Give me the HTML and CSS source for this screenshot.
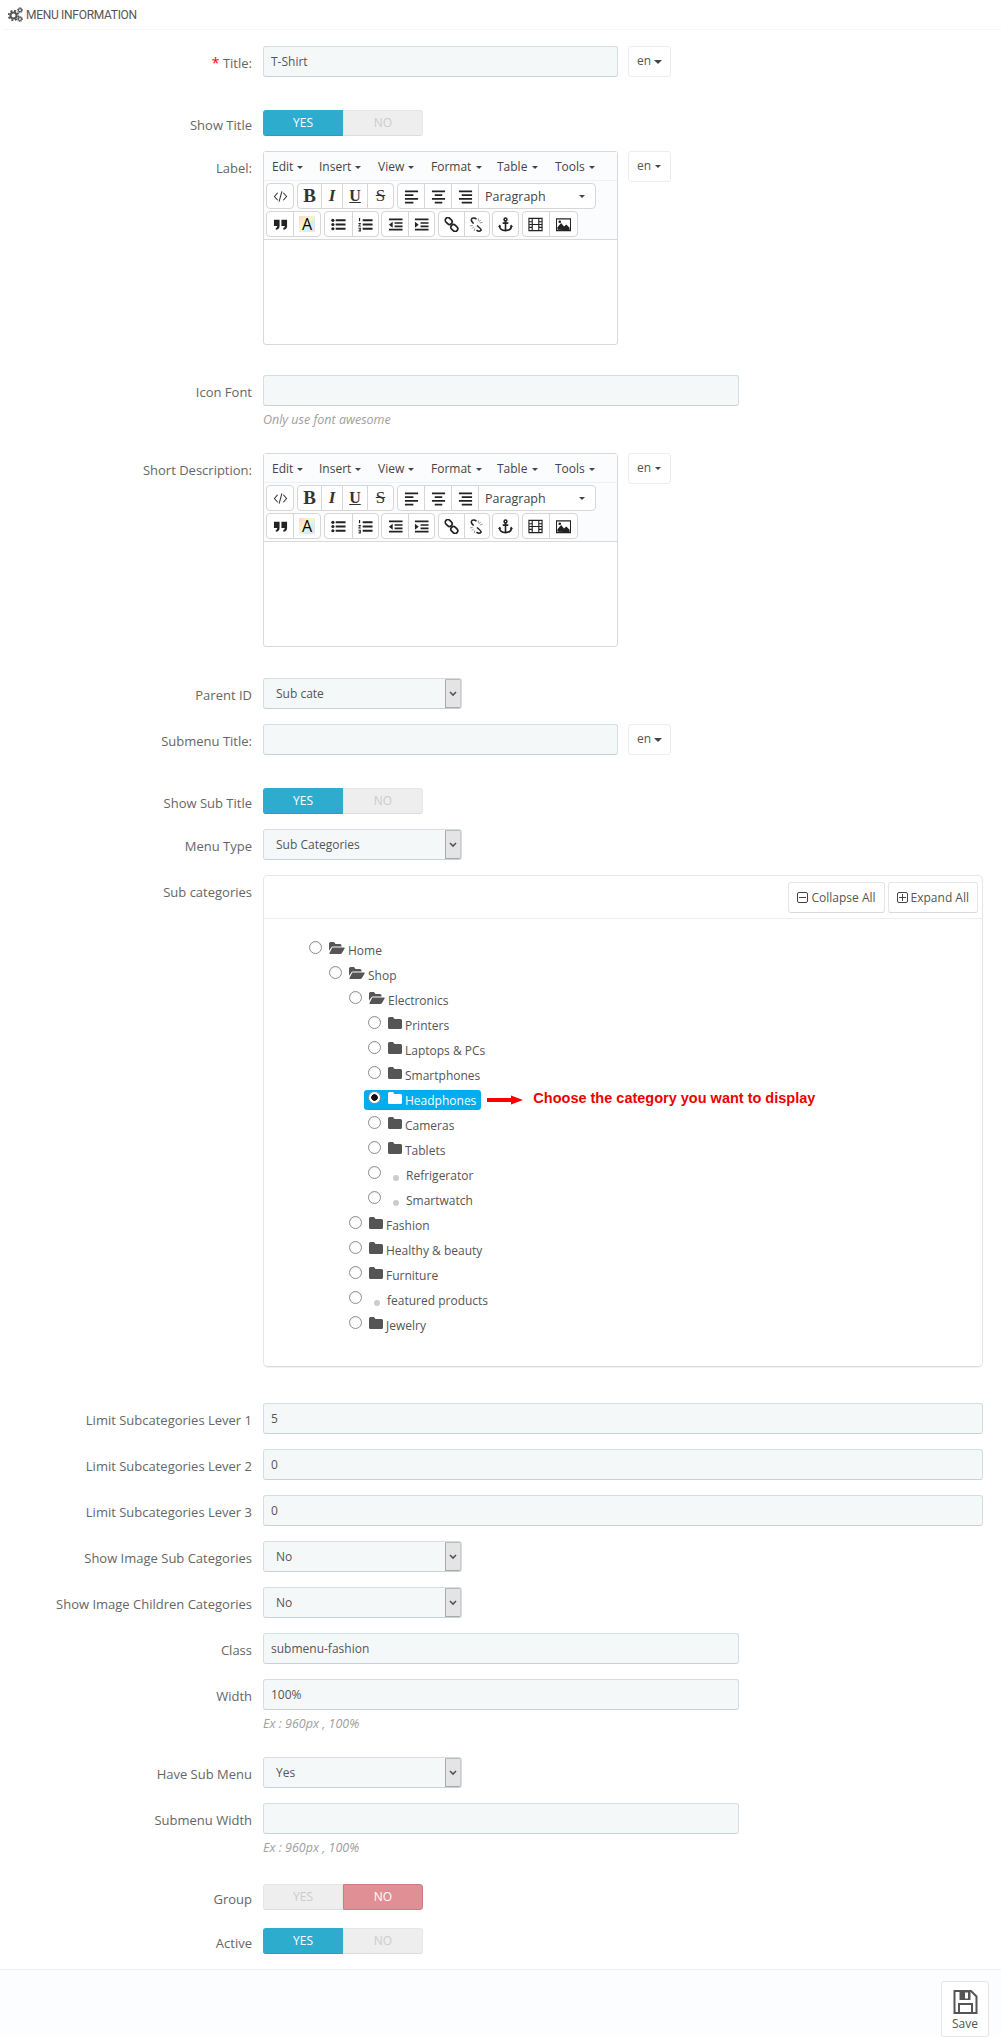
FILE: index.html
```html
<!DOCTYPE html>
<html lang="en">
<head>
<meta charset="utf-8">
<title>Menu information</title>
<link rel="stylesheet" href="styles.css">
</head>
<body>
<svg class="defs" width="0" height="0" aria-hidden="true">
  <symbol id="i-code" viewBox="0 0 16 16"><path d="M5 4 1.500 8 5 12M11 4l3.500 4L11 12M9.500 2.500 6.500 13.500" fill="none" stroke="#333" stroke-width="1.100"/></symbol>
  <symbol id="i-al" viewBox="0 0 16 16"><path d="M1 1.500h14v2H1zM1 5.500h9v2H1zM1 9.500h14v2H1zM1 13.500h9v2H1z" fill="#222"/></symbol>
  <symbol id="i-ac" viewBox="0 0 16 16"><path d="M1 1.500h14v2H1zM4 5.500h8v2H4zM1 9.500h14v2H1zM4 13.500h8v2H4z" fill="#222"/></symbol>
  <symbol id="i-ar" viewBox="0 0 16 16"><path d="M1 1.500h14v2H1zM4 5.500h11v2H4zM1 9.500h14v2H1zM4 13.500h11v2H4z" fill="#222"/></symbol>
  <symbol id="i-quote" viewBox="0 0 16 16"><path d="M1 3h6v6.500c0 2.500-1.500 3.800-4 4V11.500c1 0 1.500-.7 1.500-2H1zM9 3h6v6.500c0 2.500-1.500 3.800-4 4V11.500c1 0 1.500-.7 1.500-2H9z" fill="#222"/></symbol>
  <symbol id="i-ul" viewBox="0 0 16 16"><path d="M5 2.500h10.500v2H5zM5 7h10.500v2H5zM5 11.500h10.500v2H5z" fill="#222"/><circle cx="2" cy="3.500" r="1.700" fill="#222"/><circle cx="2" cy="8" r="1.700" fill="#222"/><circle cx="2" cy="12.500" r="1.700" fill="#222"/></symbol>
  <symbol id="i-ol" viewBox="0 0 16 16"><path d="M5 2.500h10.500v2H5zM5 7h10.500v2H5zM5 11.500h10.500v2H5z" fill="#222"/><path d="M1 1h1.300v3.500H1zM.5 6.500h2.500v1L1.500 9H3v1H.5V9L2 7.500H.5zM.5 11.500H3V15.500H.5v-1H2V14H1v-.8h1v-.7H.5z" fill="#222"/></symbol>
  <symbol id="i-out" viewBox="0 0 16 16"><path d="M1 1.500h14.500v2H1zM7 5.500h8.500v1.800H7zM7 9h8.500v1.800H7zM1 12.500h14.500v2H1z" fill="#222"/><path d="M5 5v6.500L1 8.200z" fill="#222"/></symbol>
  <symbol id="i-in" viewBox="0 0 16 16"><path d="M1 1.500h14.500v2H1zM7 5.500h8.500v1.800H7zM7 9h8.500v1.800H7zM1 12.500h14.500v2H1z" fill="#222"/><path d="M1 5v6.500l4-3.300z" fill="#222"/></symbol>
  <symbol id="i-link" viewBox="0 0 16 16"><g fill="none" stroke="#222" stroke-width="1.800"><rect x="1" y="1.500" width="8" height="5.600" rx="2.800" transform="rotate(45 5 4.300)"/><rect x="7" y="8.900" width="8" height="5.600" rx="2.800" transform="rotate(45 11 11.700)"/></g></symbol>
  <symbol id="i-unlink" viewBox="0 0 16 16"><g fill="none" stroke="#222" stroke-width="1.600"><path d="M8 2.500C6 .5 3 .8 2.500 2.800 2.100 4.300 3.200 5.300 5 7"/><path d="M8.500 9c1.800 1.700 3.800 2.800 4.600 4.800-.9 1.800-3.400 1.700-5.100.2"/></g><path d="M10 1.500v3M12.500 3 11 5M14.500 5.500l-3 1M1 9.500l3-.5M3 12.500 5 10.500M5.500 15l.8-3" stroke="#777" stroke-width=".8"/></symbol>
  <symbol id="i-anchor" viewBox="0 0 16 16"><g fill="none" stroke="#222" stroke-width="1.700"><circle cx="8" cy="2.600" r="1.500"/><path d="M8 4v10.500M5 6.500h6M1.500 9.500c.3 3 3 5 6.500 5s6.200-2 6.500-5"/></g><path d="M0 10.500 2 8l1.500 2.500zM12.500 10.500 14 8l2 2.500z" fill="#222"/></symbol>
  <symbol id="i-film" viewBox="0 0 16 16"><path d="M1 1.500h14v13H1zM4.500 1.500v13M11.500 1.500v13M1 5h3.500M1 8h3.500M1 11h3.500M11.500 5H15M11.500 8H15M11.500 11H15M4.500 8h7" fill="none" stroke="#222" stroke-width="1.200"/></symbol>
  <symbol id="i-img" viewBox="0 0 16 16"><path d="M.5 2h15v12.500H.5z" fill="none" stroke="#222" stroke-width="1.200"/><path d="M1.500 13.500V11l4-4.500 3 3.500 2.500-2 3.500 3.500v2.500z" fill="#222"/><circle cx="4" cy="5" r="1.400" fill="#222"/></symbol>
  <symbol id="i-folder" viewBox="0 0 14 12"><path d="M1.500 0H5l1.500 2h6A1.500 1.500 0 0 1 14 3.500v7a1.500 1.500 0 0 1-1.500 1.500h-11A1.500 1.500 0 0 1 0 10.500v-9A1.500 1.500 0 0 1 1.500 0z" fill="currentColor"/></symbol>
  <symbol id="i-open" viewBox="0 0 16 12"><path d="M0 8.800V1.500A1.500 1.500 0 0 1 1.500 0H5l1.500 2H11a1.500 1.500 0 0 1 1.500 1.500v1H4a2 2 0 0 0-1.800 1.100z" fill="currentColor"/><path d="M3.300 5.500H15a.7.7 0 0 1 .6 1L13 11a2 2 0 0 1-1.700 1H1a.6.6 0 0 1-.5-.9L3 6z" fill="currentColor"/></symbol>
</svg>

<header class="panel-title">
  <svg class="cogs" viewBox="0 0 15 15" width="15" height="15"><g fill="none" stroke="#555"><circle cx="5.500" cy="8.500" r="3" stroke-width="2"/><circle cx="5.500" cy="8.500" r="4.800" stroke-width="1.800" stroke-dasharray="2 1.770"/><circle cx="12" cy="3.200" r="1.500" stroke-width="1.200"/><circle cx="12" cy="3.200" r="2.500" stroke-width="1" stroke-dasharray="1.200 .76"/><circle cx="12" cy="12" r="1.500" stroke-width="1.200"/><circle cx="12" cy="12" r="2.500" stroke-width="1" stroke-dasharray="1.200 .76"/></g></svg>
  <span>MENU INFORMATION</span>
</header>

<form class="form">
  <div class="row gap33">
    <label class="lbl"><span class="req">*</span> Title:</label>
    <div class="field"><div class="input w-lang">T-Shirt</div></div>
    <div class="lang">en <i class="caret big"></i></div>
  </div>
  <div class="row">
    <label class="lbl lbl-t">Show Title</label>
    <div class="toggle"><span class="on">YES</span><span class="off">NO</span></div>
  </div>
  <div class="row gap30">
    <label class="lbl">Label:</label>
    <div class="editor">
      <div class="menubar"><span class="mi m-edit">Edit <i class="caret"></i></span><span class="mi m-insert">Insert <i class="caret"></i></span><span class="mi m-view">View <i class="caret"></i></span><span class="mi m-format">Format <i class="caret"></i></span><span class="mi m-table">Table <i class="caret"></i></span><span class="mi">Tools <i class="caret"></i></span></div>
      <div class="toolbar">
        <div class="tb-row">
          <div class="grp"><span class="b b26"><svg class="ic"><use href="#i-code"/></svg></span></div>
          <div class="grp"><span class="b b23 t-b">B</span><span class="b b21 t-i">I</span><span class="b b25 t-u">U</span><span class="b b26 t-s">S</span></div>
          <div class="grp"><span class="b b26"><svg class="ic"><use href="#i-al"/></svg></span><span class="b b27"><svg class="ic"><use href="#i-ac"/></svg></span><span class="b b27"><svg class="ic"><use href="#i-ar"/></svg></span><span class="b para">Paragraph <i class="caret"></i></span></div>
        </div>
        <div class="tb-row tb-row2">
          <div class="grp"><span class="b b26"><svg class="ic"><use href="#i-quote"/></svg></span><span class="b b27"><span class="t-a">A</span></span></div>
          <div class="grp"><span class="b b27"><svg class="ic"><use href="#i-ul"/></svg></span><span class="b b26"><svg class="ic"><use href="#i-ol"/></svg></span></div>
          <div class="grp"><span class="b b26"><svg class="ic"><use href="#i-out"/></svg></span><span class="b b26"><svg class="ic"><use href="#i-in"/></svg></span></div>
          <div class="grp"><span class="b b25"><svg class="ic"><use href="#i-link"/></svg></span><span class="b b25"><svg class="ic"><use href="#i-unlink"/></svg></span></div>
          <div class="grp"><span class="b b25"><svg class="ic"><use href="#i-anchor"/></svg></span></div>
          <div class="grp"><span class="b b26"><svg class="ic"><use href="#i-film"/></svg></span><span class="b b28"><svg class="ic"><use href="#i-img"/></svg></span></div>
        </div>
      </div>
      <div class="edit-area"></div>
    </div>
    <div class="lang">en <i class="caret"></i></div>
  </div>
  <div class="row help-row">
    <label class="lbl">Icon Font</label>
    <div class="field"><div class="input w-mid"></div><p class="help">Only use font awesome</p></div>
  </div>
  <div class="row gap31">
    <label class="lbl">Short Description:</label>
    <div class="editor">
      <div class="menubar"><span class="mi m-edit">Edit <i class="caret"></i></span><span class="mi m-insert">Insert <i class="caret"></i></span><span class="mi m-view">View <i class="caret"></i></span><span class="mi m-format">Format <i class="caret"></i></span><span class="mi m-table">Table <i class="caret"></i></span><span class="mi">Tools <i class="caret"></i></span></div>
      <div class="toolbar">
        <div class="tb-row">
          <div class="grp"><span class="b b26"><svg class="ic"><use href="#i-code"/></svg></span></div>
          <div class="grp"><span class="b b23 t-b">B</span><span class="b b21 t-i">I</span><span class="b b25 t-u">U</span><span class="b b26 t-s">S</span></div>
          <div class="grp"><span class="b b26"><svg class="ic"><use href="#i-al"/></svg></span><span class="b b27"><svg class="ic"><use href="#i-ac"/></svg></span><span class="b b27"><svg class="ic"><use href="#i-ar"/></svg></span><span class="b para">Paragraph <i class="caret"></i></span></div>
        </div>
        <div class="tb-row tb-row2">
          <div class="grp"><span class="b b26"><svg class="ic"><use href="#i-quote"/></svg></span><span class="b b27"><span class="t-a">A</span></span></div>
          <div class="grp"><span class="b b27"><svg class="ic"><use href="#i-ul"/></svg></span><span class="b b26"><svg class="ic"><use href="#i-ol"/></svg></span></div>
          <div class="grp"><span class="b b26"><svg class="ic"><use href="#i-out"/></svg></span><span class="b b26"><svg class="ic"><use href="#i-in"/></svg></span></div>
          <div class="grp"><span class="b b25"><svg class="ic"><use href="#i-link"/></svg></span><span class="b b25"><svg class="ic"><use href="#i-unlink"/></svg></span></div>
          <div class="grp"><span class="b b25"><svg class="ic"><use href="#i-anchor"/></svg></span></div>
          <div class="grp"><span class="b b26"><svg class="ic"><use href="#i-film"/></svg></span><span class="b b28"><svg class="ic"><use href="#i-img"/></svg></span></div>
        </div>
      </div>
      <div class="edit-area"></div>
    </div>
    <div class="lang">en <i class="caret"></i></div>
  </div>
  <div class="row">
    <label class="lbl">Parent ID</label>
    <div class="select"><span class="sel-text">Sub cate</span><span class="sel-btn"><svg viewBox="0 0 8 6" width="8" height="6"><path d="M1 1l3 3 3-3" fill="none" stroke="#555" stroke-width="1.600"/></svg></span></div>
  </div>
  <div class="row gap33">
    <label class="lbl">Submenu Title:</label>
    <div class="field"><div class="input w-lang"></div></div>
    <div class="lang">en <i class="caret big"></i></div>
  </div>
  <div class="row">
    <label class="lbl lbl-t">Show Sub Title</label>
    <div class="toggle"><span class="on">YES</span><span class="off">NO</span></div>
  </div>
  <div class="row">
    <label class="lbl">Menu Type</label>
    <div class="select"><span class="sel-text">Sub Categories</span><span class="sel-btn"><svg viewBox="0 0 8 6" width="8" height="6"><path d="M1 1l3 3 3-3" fill="none" stroke="#555" stroke-width="1.600"/></svg></span></div>
  </div>
  <div class="row gap36">
    <label class="lbl">Sub categories</label>
    <div class="tree-panel">
      <div class="tree-head">
        <span class="tbtn"><i class="box"><i class="h"></i></i>Collapse All</span>
        <span class="tbtn"><i class="box"><i class="h"></i><i class="v"></i></i>Expand All</span>
      </div>
      <ul class="tree">
        <li>
          <div class="node"><i class="radio"></i><svg class="fo"><use href="#i-open"/></svg><span>Home</span></div>
          <ul>
            <li>
              <div class="node"><i class="radio"></i><svg class="fo"><use href="#i-open"/></svg><span>Shop</span></div>
              <ul>
                <li>
                  <div class="node"><i class="radio"></i><svg class="fo"><use href="#i-open"/></svg><span>Electronics</span></div>
                  <ul>
                    <li><div class="node"><i class="radio"></i><svg class="fc"><use href="#i-folder"/></svg><span>Printers</span></div></li>
                    <li><div class="node"><i class="radio"></i><svg class="fc"><use href="#i-folder"/></svg><span>Laptops &amp; PCs</span></div></li>
                    <li><div class="node"><i class="radio"></i><svg class="fc"><use href="#i-folder"/></svg><span>Smartphones</span></div></li>
                    <li class="has-note">
                      <div class="node sel"><i class="radio checked"></i><svg class="fc"><use href="#i-folder"/></svg><span>Headphones</span></div>
                      <svg class="arrow" viewBox="0 0 36 10" width="36" height="10"><path d="M0 3h24V.5L36 5 24 9.500V7H0z" fill="#f00"/></svg>
                      <strong class="note">Choose the category you want to display</strong>
                    </li>
                    <li><div class="node"><i class="radio"></i><svg class="fc"><use href="#i-folder"/></svg><span>Cameras</span></div></li>
                    <li><div class="node"><i class="radio"></i><svg class="fc"><use href="#i-folder"/></svg><span>Tablets</span></div></li>
                    <li><div class="node"><i class="radio"></i><i class="dot"></i><span>Refrigerator</span></div></li>
                    <li><div class="node"><i class="radio"></i><i class="dot"></i><span>Smartwatch</span></div></li>
                  </ul>
                </li>
                <li><div class="node"><i class="radio"></i><svg class="fc"><use href="#i-folder"/></svg><span>Fashion</span></div></li>
                <li><div class="node"><i class="radio"></i><svg class="fc"><use href="#i-folder"/></svg><span>Healthy &amp; beauty</span></div></li>
                <li><div class="node"><i class="radio"></i><svg class="fc"><use href="#i-folder"/></svg><span>Furniture</span></div></li>
                <li><div class="node"><i class="radio"></i><i class="dot"></i><span>featured products</span></div></li>
                <li><div class="node"><i class="radio"></i><svg class="fc"><use href="#i-folder"/></svg><span>Jewelry</span></div></li>
              </ul>
            </li>
          </ul>
        </li>
      </ul>
    </div>
  </div>
  <div class="row"><label class="lbl">Limit Subcategories Lever 1</label><div class="field grow"><div class="input">5</div></div></div>
  <div class="row"><label class="lbl">Limit Subcategories Lever 2</label><div class="field grow"><div class="input">0</div></div></div>
  <div class="row"><label class="lbl">Limit Subcategories Lever 3</label><div class="field grow"><div class="input">0</div></div></div>
  <div class="row">
    <label class="lbl">Show Image Sub Categories</label>
    <div class="select"><span class="sel-text">No</span><span class="sel-btn"><svg viewBox="0 0 8 6" width="8" height="6"><path d="M1 1l3 3 3-3" fill="none" stroke="#555" stroke-width="1.600"/></svg></span></div>
  </div>
  <div class="row">
    <label class="lbl">Show Image Children Categories</label>
    <div class="select"><span class="sel-text">No</span><span class="sel-btn"><svg viewBox="0 0 8 6" width="8" height="6"><path d="M1 1l3 3 3-3" fill="none" stroke="#555" stroke-width="1.600"/></svg></span></div>
  </div>
  <div class="row"><label class="lbl">Class</label><div class="field"><div class="input w-mid">submenu-fashion</div></div></div>
  <div class="row help-row"><label class="lbl">Width</label><div class="field"><div class="input w-mid">100%</div><p class="help">Ex : 960px , 100%</p></div></div>
  <div class="row">
    <label class="lbl">Have Sub Menu</label>
    <div class="select"><span class="sel-text">Yes</span><span class="sel-btn"><svg viewBox="0 0 8 6" width="8" height="6"><path d="M1 1l3 3 3-3" fill="none" stroke="#555" stroke-width="1.600"/></svg></span></div>
  </div>
  <div class="row help-row tall"><label class="lbl">Submenu Width</label><div class="field"><div class="input w-mid"></div><p class="help">Ex : 960px , 100%</p></div></div>
  <div class="row gap18">
    <label class="lbl lbl-t">Group</label>
    <div class="toggle"><span class="off">YES</span><span class="no-on">NO</span></div>
  </div>
  <div class="row">
    <label class="lbl lbl-t">Active</label>
    <div class="toggle"><span class="on">YES</span><span class="off">NO</span></div>
  </div>
</form>

<footer class="footer">
  <div class="save">
    <svg viewBox="0 0 24 24" width="25" height="24"><path d="M1 1h16.500L23 6.500V23H1z" fill="none" stroke="#555" stroke-width="2"/><path d="M6 1h11v9H6z" fill="#555"/><path d="M11.500 2.500h3v6h-3z" fill="#fff"/><path d="M5.500 23v-9h13v9" fill="none" stroke="#555" stroke-width="2"/></svg>
    <span>Save</span>
  </div>
</footer>
</body>
</html>
```
FILE: styles.css
```css
* { box-sizing: border-box; }
html, body { margin: 0; padding: 0; }
body {
  width: 1001px;
  height: 2037px;
  background: #fff;
  color: #555;
  font-family: "Open Sans", "Liberation Sans", sans-serif;
  font-size: 12px;
  overflow: hidden;
}
.defs { display: block; height: 0; }
i { font-style: normal; }

.panel-title {
  height: 30px;
  margin-left: 3px;
  padding-left: 5px;
  display: flex;
  align-items: center;
  gap: 3px;
  border-bottom: 1px solid #f6f6f6;
  font-family: Roboto, "Open Sans", sans-serif;
  font-size: 12px;
  letter-spacing: -0.3px;
  color: #555;
}
.form { padding-top: 16px; }
.row { display: flex; align-items: flex-start; margin-bottom: 15px; padding-right: 18px; }
.gap18 { margin-bottom: 18px; }
.gap30 { margin-bottom: 30px; }
.gap31 { margin-bottom: 31px; }
.gap33 { margin-bottom: 33px; }
.gap36 { margin-bottom: 36px; }
.help-row { margin-bottom: 0; height: 78px; }
.help-row.tall { height: 81px; }

.lbl {
  flex: 0 0 252px;
  height: 26px;
  margin-right: 11px;
  text-align: right;
  font-size: 13px;
  line-height: 34px;
  color: #666;
  white-space: nowrap;
}
.lbl-t { line-height: 30px; }
.req { color: #f00; font-size: 14px; }
.field { display: block; }
.grow { flex: 1; }

.input {
  height: 31px;
  padding: 0 7px;
  line-height: 29px;
  background: #f5f8f9;
  border: 1px solid #d3dfe3;
  border-bottom-color: #c5d3d8;
  border-radius: 3px;
  color: #555;
}
.w-lang { width: 355px; }
.w-mid { width: 476px; }
.help {
  margin: 6px 0 0;
  font-size: 12.5px;
  line-height: 16px;
  font-style: italic;
  color: #a0a0a0;
}
.lang {
  margin-left: 10px;
  width: 43px;
  height: 31px;
  line-height: 28px;
  padding-left: 8px;
  background: #fff;
  border: 1px solid #e8eef0;
  border-radius: 3px;
  color: #555;
}
.caret {
  display: inline-block;
  vertical-align: 2px;
  width: 0;
  height: 0;
  border-left: 3px solid transparent;
  border-right: 3px solid transparent;
  border-top: 3px solid #444;
  margin-left: 1px;
}
.caret.big { border-left-width: 4px; border-right-width: 4px; border-top-width: 4px; margin-left: 0; vertical-align: 1px; }

.toggle {
  display: flex;
  width: 160px;
  height: 26px;
  line-height: 24px;
  text-align: center;
  font-size: 12px;
}
.toggle span { flex: 0 0 80px; }
.on { background: #2eacce; color: #fff; line-height: 26px; border-radius: 3px 0 0 3px; border-bottom: 1px solid #2a9dbc; }
.off { background: #eee; color: #ccc; border: 1px solid #e6e6e6; border-bottom-color: #ddd; border-radius: 0 3px 3px 0; }
.toggle .off:first-child { border-radius: 3px 0 0 3px; }
.no-on { background: #e08f95; color: #fff; border: 1px solid #d27a82; border-radius: 0 3px 3px 0; }

.select {
  display: flex;
  width: 199px;
  height: 31px;
  background: #f5f8f9;
  border: 1px solid #d3dfe3;
  border-bottom-color: #c5d3d8;
  border-radius: 3px;
  line-height: 30px;
}
.sel-text { flex: 1; padding-left: 12px; }
.sel-btn {
  flex: 0 0 16px;
  height: 29px;
  display: flex;
  align-items: flex-start;
  justify-content: center;
  padding-top: 11px;
  background: #e4e4e4;
  border: 1px solid #aaa;
  border-top-color: #bbb;
  border-right-color: #ccc;
  border-radius: 0 2px 2px 0;
}

.editor {
  width: 355px;
  background: #fff;
  border: 1px solid #d9d9d9;
  border-radius: 3px;
}
.menubar {
  display: flex;
  height: 29px;
  padding-left: 8px;
  line-height: 29px;
  background: #fbfcfd;
  border-bottom: 1px solid #eef1f3;
  color: #444;
  font-size: 12px;
}
.mi { white-space: nowrap; }
.m-edit { width: 47px; }
.m-insert { width: 59px; }
.m-view { width: 53px; }
.m-format { width: 66px; }
.m-table { width: 58px; }
.toolbar {
  height: 59px;
  padding: 2px 0 0 2px;
  background: #fbfcfd;
  border-bottom: 1px solid #d9d9d9;
}
.tb-row { display: flex; gap: 3px; height: 26px; margin-bottom: 2px; }
.tb-row2 { gap: 2.6px; }
.grp {
  display: flex;
  height: 26px;
  background: #fff;
  border: 1px solid #d6d6d6;
  border-radius: 4px;
}
.b {
  display: flex;
  align-items: center;
  justify-content: center;
  height: 24px;
  border-left: 1px solid #d6d6d6;
  color: #222;
}
.b:first-child { border-left: 0; }
.b21 { width: 21px; }
.b23 { width: 23px; }
.b25 { width: 25px; }
.b26 { width: 26px; }
.b27 { width: 27px; }
.b28 { width: 28px; }
.ic { width: 15px; height: 15px; display: block; }
.t-b, .t-i, .t-u, .t-s { font-family: "Liberation Serif", serif; font-size: 17px; color: #222; }
.t-b { font-weight: 700; font-size: 19px; color: #333; }
.t-i { font-style: italic; font-weight: 700; color: #333; }
.t-u { text-decoration: underline; font-weight: 700; color: #333; font-size: 16px; }
.t-s { text-decoration: line-through; color: #333; }
.t-a {
  display: block;
  width: 16px;
  height: 16px;
  line-height: 16px;
  text-align: center;
  font-size: 16px;
  color: #000;
  background: linear-gradient(135deg, #fcd5d5 0%, #fff3c4 40%, #cdf0f5 70%, #fbdcf3 100%);
}
.para { justify-content: space-between; width: 117px; padding: 0 10px 0 6px; color: #444; font-size: 12.5px; }
.edit-area { height: 104px; }

.tree-panel {
  flex: 1;
  height: 492px;
  border: 1px solid #e6e6e6;
  border-bottom-color: #d9d9d9;
  border-radius: 5px;
  box-shadow: 0 1px 1px rgba(0, 0, 0, .06);
}
.tree-head {
  height: 43px;
  display: flex;
  justify-content: flex-end;
  gap: 3px;
  padding: 6px 4px 0 0;
  border-bottom: 1px solid #eee;
}
.tbtn {
  display: flex;
  align-items: center;
  height: 31px;
  padding: 0 8px;
  background: #fff;
  border: 1px solid #e6e6e6;
  border-bottom-color: #d9d9d9;
  border-radius: 3px;
  color: #555;
}
.box {
  position: relative;
  display: block;
  width: 11px;
  height: 11px;
  margin-right: 3px;
  border: 1px solid #444;
  border-radius: 2px;
}
.box .h { position: absolute; left: 1px; right: 1px; top: 4px; height: 1px; background: #444; }
.box .v { position: absolute; top: 1px; bottom: 1px; left: 4px; width: 1px; background: #444; }
.tree, .tree ul { list-style: none; margin: 0; padding: 0; }
.tree { padding: 19px 0 0 45px; }
.tree ul { padding-left: 20px; }
.tree > li > ul > li > ul > li > ul { padding-left: 19px; }
.tree li > .node { vertical-align: top; }
.tree li { min-height: 25px; }
.node {
  display: inline-flex;
  align-items: flex-start;
  height: 20px;
  margin: 2px 0 3px -4px;
  padding: 0 5px 0 4px;
  line-height: 22px;
  border-radius: 3px;
  color: #555;
  white-space: nowrap;
}
.sel { background: #00aeef; color: #fff; }
.radio {
  flex: 0 0 13px;
  width: 13px;
  height: 13px;
  margin: 1px 7px 0 0;
  border-radius: 50%;
  border: 1px solid #8d8d8d;
  background: #fff;
  box-shadow: inset 0 1px 1px rgba(0,0,0,.08);
}
.radio.checked { background: radial-gradient(circle, #111 0 3px, #fff 3.500px); }
.fo { width: 16px; height: 12px; margin: 2px 3px 0 0; color: #555; }
.fc { width: 14px; height: 12px; margin: 2px 3px 0 0; color: #555; }
.sel .fc { color: #fff; }
.dot { width: 6px; height: 6px; margin: 10px 7px 0 5px; border-radius: 50%; background: #ccc; }
.has-note { display: flex; align-items: flex-start; }
.arrow { margin: 7px 0 0 6px; }
.note {
  margin: 0 0 0 10px;
  font-family: "Liberation Sans", Arial, sans-serif;
  font-size: 14.5px;
  line-height: 20px;
  color: #e00;
  white-space: nowrap;
}

.footer {
  display: flex;
  justify-content: flex-end;
  height: 68px;
  padding: 11px 12px 0 0;
  background: #fcfdfe;
  border-top: 1px solid #f0f0f0;
}
.save {
  display: flex;
  flex-direction: column;
  align-items: center;
  width: 48px;
  height: 56px;
  padding-top: 8px;
  background: #fff;
  border: 1px solid #e6e6e6;
  border-radius: 3px;
  color: #555;
  font-size: 12px;
  line-height: 20px;
}
```
